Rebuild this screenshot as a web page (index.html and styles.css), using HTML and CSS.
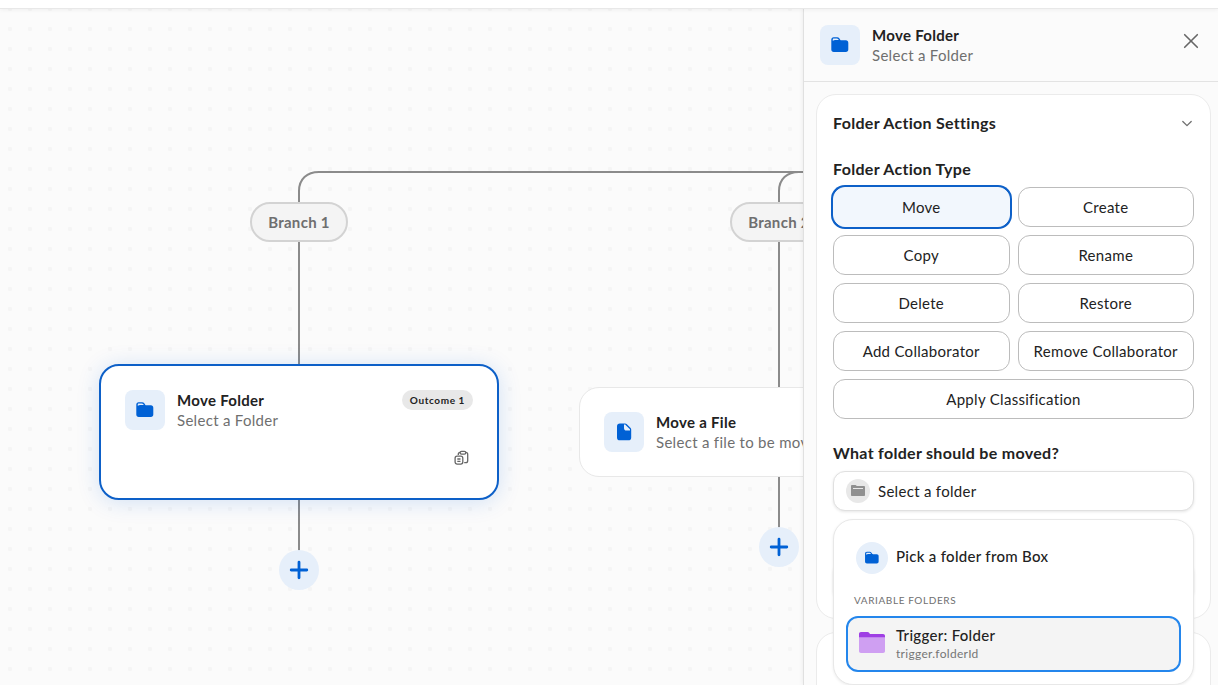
FILE: index.html
```html
<!DOCTYPE html>
<html lang="en">
<head>
    <meta charset="utf-8">
    <title>Workflow Builder</title>
    <link rel="stylesheet" href="styles.css">
</head>
<body>
    <svg class="sprite" aria-hidden="true">
        <symbol id="icon-folder" viewBox="0 0 20 20">
            <path fill="#0061d5" d="M3.700 2.200h3.500c.8 0 1.400.3 1.900.9l1.100 1.600c.3.400.7.600 1.200.600h4.500c1.500 0 2.400.9 2.400 2.400v6.800c0 1.500-.9 2.400-2.400 2.400H3.700c-1.500 0-2.400-.9-2.400-2.400V4.600c0-1.500.9-2.400 2.400-2.400z"/>
            <path fill="#e6effa" d="M3.500 3.500h3.400c.5 0 .9.200 1.200.600L8.800 5H5.200c-1 0-1.800.3-2.400.9V4.300c0-.5.2-.8.7-.8z"/>
        </symbol>
        <symbol id="icon-file" viewBox="0 0 20 20">
            <path fill="#0061d5" d="M5.900 1.500h5.300c.5 0 1 .2 1.400.6l4 4c.4.400.6.9.6 1.400v7.900c0 1.900-1 2.900-2.900 2.900H5.900c-1.900 0-2.900-1-2.900-2.900v-11c0-1.900 1-2.900 2.900-2.900z"/>
            <path fill="#e6effa" d="M10 2.600h.8c.3 0 .6.100.8.300L15.700 7c.2.200.3.500.3.800v.7h-3.400c-1.700 0-2.600-.9-2.600-2.600z"/>
        </symbol>
        <symbol id="icon-plus" viewBox="0 0 20 20">
            <path d="M10 2.200v15.600M2.200 10h15.600" fill="none" stroke="#0061d5" stroke-width="2.800" stroke-linecap="round"/>
        </symbol>
    </svg>

    <div class="topbar"></div>
    <div class="workspace">
        <div class="canvas">
            <svg class="edges" width="900" height="676" fill="none" stroke="#8b8b8b" stroke-width="2">
                <path d="M299 195v-13c0-12 8-19 20-19h580"/>
                <path d="M779 195v-13c0-12 8-19 20-19h100"/>
                <path d="M299 232v124M299 490v52M779 232v148M779 467v52"/>
            </svg>
            <div class="branch branch-1">Branch 1</div>
            <div class="branch branch-2">Branch 2</div>

            <div class="node node-folder selected">
                <div class="node-main">
                    <div class="tile"><svg><use href="#icon-folder"/></svg></div>
                    <div class="titles">
                        <div class="title">Move Folder</div>
                        <div class="subtitle">Select a Folder</div>
                    </div>
                    <span class="outcome">Outcome 1</span>
                </div>
                <div class="node-tools">
                    <svg width="16" height="16" viewBox="0 0 16 16" fill="none" stroke="#666" stroke-width="1.300">
                        <path d="M4.300 5V4.200c0-1.200.7-1.900 1.900-1.900M11.800 2.300c1.200 0 1.900.7 1.900 1.900v6.600c0 1.200-.7 1.900-1.900 1.900h-1.600"/>
                        <rect x="6.100" y="1.300" width="5.700" height="2.900" rx="1.400"/>
                        <rect x="1.100" y="6.200" width="7.700" height="7.900" rx="2"/>
                        <path d="M3.300 9h3.200M3.300 11.400h3.200"/>
                    </svg>
                </div>
            </div>
            <div class="node node-file">
                <div class="node-main">
                    <div class="tile"><svg><use href="#icon-file"/></svg></div>
                    <div class="titles">
                        <div class="title">Move a File</div>
                        <div class="subtitle">Select a file to be moved</div>
                    </div>
                </div>
            </div>
            <div class="add add-1"><svg><use href="#icon-plus"/></svg></div>
            <div class="add add-2"><svg><use href="#icon-plus"/></svg></div>
        </div>

        <div class="panel">
            <div class="panel-header">
                <div class="tile"><svg><use href="#icon-folder"/></svg></div>
                <div class="titles">
                    <div class="title">Move Folder</div>
                    <div class="subtitle">Select a Folder</div>
                </div>
                <svg class="close" width="16" height="16" viewBox="0 0 16 16" fill="none" stroke="#666" stroke-width="1.600" stroke-linecap="round">
                    <path d="M1.700 1.700l12.600 12.600M14.300 1.700L1.700 14.300"/>
                </svg>
            </div>

            <div class="panel-body">
                <div class="section">
                    <div class="section-header">
                        <h2>Folder Action Settings</h2>
                        <svg width="14" height="14" viewBox="0 0 14 14" fill="none" stroke="#6f6f6f" stroke-width="1.300" stroke-linecap="round" stroke-linejoin="round">
                            <path d="M2.800 5.500l4.200 4.100 4.200-4.100"/>
                        </svg>
                    </div>
                    <h3>Folder Action Type</h3>
                    <div class="options">
                        <div class="option active">Move</div>
                        <div class="option">Create</div>
                        <div class="option">Copy</div>
                        <div class="option">Rename</div>
                        <div class="option">Delete</div>
                        <div class="option">Restore</div>
                        <div class="option">Add Collaborator</div>
                        <div class="option">Remove Collaborator</div>
                        <div class="option wide">Apply Classification</div>
                    </div>
                    <h3 class="question">What folder should be moved?</h3>
                    <div class="picker">
                        <div class="field">
                            <span class="field-icon">
                                <svg width="16" height="14" viewBox="0 0 16 14">
                                    <path fill="#909090" d="M1 2.200C1 1.500 1.400 1 2.100 1h3.300c.4 0 .7.200.9.500l.4.600h7.200c.7 0 1.100.400 1.100 1.100v7.700c0 .7-.4 1.100-1.100 1.100H2.100c-.7 0-1.100-.4-1.100-1.100z"/>
                                    <path stroke="#e8e8e8" d="M3 4.500h10"/>
                                </svg>
                            </span>
                            Select a folder
                        </div>
                        <div class="dropdown">
                            <div class="pick">
                                <span class="pick-icon"><svg><use href="#icon-folder"/></svg></span>
                                <span class="pick-label">Pick a folder from Box</span>
                            </div>
                            <div class="group">Variable folders</div>
                            <div class="variable">
                                <svg class="variable-icon" width="26" height="22" viewBox="0 0 26 22">
                                    <path fill="#9f3fe4" d="M0 2C0 .7.700 0 2 0h6.500c.8 0 1.200.3 1.600.8l.9 1.200H24c1.300 0 2 .7 2 2v3H0z"/>
                                    <path fill="#cf9ff2" d="M0 5.300h26V19c0 1.300-.7 2-2 2H2c-1.300 0-2-.7-2-2z"/>
                                </svg>
                                <div class="variable-text">
                                    <div class="variable-name">Trigger: Folder</div>
                                    <div class="variable-path">trigger.folderId</div>
                                </div>
                            </div>
                        </div>
                    </div>
                    <div class="field field-empty"></div>
                </div>
                <div class="section section-next"></div>
            </div>
        </div>
    </div>
</body>
</html>
```
FILE: styles.css
```css
* {
    box-sizing: border-box;
}

body {
    margin: 0;
    height: 685px;
    overflow: hidden;
    display: flex;
    flex-direction: column;
    font-family: Lato, sans-serif;
    font-size: 15px;
    line-height: 20px;
    letter-spacing: 0.3px;
    color: #222;
    background: #fbfbfb;
}

.sprite {
    display: none;
}

.topbar {
    flex: none;
    height: 9px;
    background: #fff;
    border-bottom: 1px solid #e8e8e8;
    box-shadow: 0 1px 4px rgba(0, 0, 0, 0.05);
    z-index: 1;
}

.workspace {
    flex: 1;
    min-height: 0;
    display: flex;
}

/* Canvas */
.canvas {
    flex: 1;
    position: relative;
    overflow: hidden;
    background: radial-gradient(circle at 10px 10px, #f5f5f5 2px, transparent 2.4px) 0 10px / 20px 20px #fbfbfb;
}

.edges {
    position: absolute;
    left: 0;
    top: 0;
}

.branch {
    position: absolute;
    top: 193px;
    width: 98px;
    height: 40px;
    border: 2px solid #d3d3d3;
    border-radius: 20px;
    background: #f4f4f4;
    color: #6f6f6f;
    font-weight: bold;
    line-height: 37px;
    text-align: center;
}

.branch-1 {
    left: 250px;
}

.branch-2 {
    left: 730px;
}

.node {
    position: absolute;
    width: 400px;
    padding: 24px;
    background: #fff;
    border: 1px solid #e8e8e8;
    border-radius: 20px;
}

.node.selected {
    border: 2px solid #0d60c8;
    box-shadow: 0 2px 22px rgba(0, 97, 213, 0.17);
}

.node-folder {
    left: 99px;
    top: 355px;
    height: 136px;
}

.node-file {
    left: 579px;
    top: 378px;
    height: 90px;
}

.node-main {
    display: flex;
    align-items: flex-start;
    gap: 12px;
}

.tile {
    flex: none;
    width: 40px;
    height: 40px;
    display: flex;
    align-items: center;
    justify-content: center;
    border-radius: 8px;
    background: #e6effa;
}

.tile svg,
.add svg {
    width: 20px;
    height: 20px;
}

.titles {
    flex: 1;
    white-space: nowrap;
}

.title {
    font-weight: bold;
}

.subtitle {
    color: #6f6f6f;
}

.outcome {
    height: 20px;
    padding: 0 8px;
    border-radius: 10px;
    background: #e8e8e8;
    font-size: 10px;
    font-weight: bold;
    letter-spacing: 0.6px;
}

.node-tools {
    display: flex;
    justify-content: flex-end;
    padding: 20px 3px 0 0;
}

.add {
    position: absolute;
    width: 40px;
    height: 40px;
    display: flex;
    align-items: center;
    justify-content: center;
    border-radius: 50%;
    background: #e6effa;
}

.add-1 {
    left: 279px;
    top: 541px;
}

.add-2 {
    left: 759px;
    top: 518px;
}

/* Settings panel */
.panel {
    flex: none;
    width: 415px;
    position: relative;
    border-left: 1px solid #e0e0e0;
    background: #fbfbfb;
    box-shadow: 0 0 5px rgba(0, 0, 0, 0.08);
    clip-path: inset(0 0 0 -8px);
}

.panel-header {
    display: flex;
    align-items: flex-start;
    gap: 12px;
    height: 73px;
    padding: 16px 19px 0 16px;
    border-bottom: 1px solid #e3e3e3;
}

.close {
    margin-top: 8px;
}

.panel-body {
    height: 603px;
    padding: 12px 7px 0 12px;
    overflow: hidden;
}

.section {
    height: 525px;
    padding: 18px 16px 0;
    border: 1px solid #ebebeb;
    border-radius: 20px;
    background: #fff;
}

.section-next {
    margin-top: 13px;
    height: 100px;
}

.section-header {
    display: flex;
    justify-content: space-between;
    align-items: center;
    margin-bottom: 26px;
}

h2,
h3 {
    margin: 0;
    font-size: 16px;
    font-weight: bold;
    line-height: 20px;
}

.options {
    display: grid;
    grid-template-columns: 1fr 1fr;
    gap: 8px;
    margin-top: 8px;
}

.option {
    height: 40px;
    border: 1px solid #bcbcbc;
    border-radius: 12px;
    line-height: 39px;
    text-align: center;
    white-space: nowrap;
}

.option.active {
    border-color: #f2f7fd;
    background: #f2f7fd;
    box-shadow: 0 0 0 2px #0d60c8;
}

.option.wide {
    grid-column: span 2;
}

.question {
    margin-top: 24px;
}

.picker {
    position: relative;
    margin-top: 8px;
}

.field {
    display: flex;
    align-items: center;
    gap: 8px;
    height: 40px;
    padding: 0 12px;
    border: 1px solid #e0e0e0;
    border-radius: 12px;
    background: #fff;
    box-shadow: 0 1px 3px rgba(0, 0, 0, 0.1);
}

.field-empty {
    margin-top: 50px;
}

.field-icon {
    display: flex;
    align-items: center;
    justify-content: center;
    width: 24px;
    height: 24px;
    border-radius: 50%;
    background: #e8e8e8;
}

.dropdown {
    position: absolute;
    top: 48px;
    left: 0;
    right: 0;
    height: 166px;
    padding: 12px;
    border: 1px solid #e8e8e8;
    border-radius: 20px;
    background: #fff;
    box-shadow: 0 1px 3px rgba(0, 0, 0, 0.08);
}

.pick {
    display: flex;
    align-items: center;
    gap: 8px;
    height: 51px;
    padding-left: 10px;
    font-weight: 500;
}

.pick-label {
    padding-bottom: 3px;
}

.pick-icon {
    display: flex;
    align-items: center;
    justify-content: center;
    width: 32px;
    height: 32px;
    border-radius: 50%;
    background: #e6effa;
}

.pick-icon svg {
    width: 16px;
    height: 16px;
}

.group {
    height: 33px;
    padding: 7px 8px 0;
    font-size: 10px;
    letter-spacing: 0.6px;
    text-transform: uppercase;
    color: #6f6f6f;
}

.variable {
    display: flex;
    align-items: center;
    gap: 11px;
    height: 56px;
    padding: 0 11px;
    border: 2px solid #2486ec;
    border-radius: 12px;
    background: #f4f4f4;
}

.variable-icon {
    margin-bottom: 2px;
}

.variable-text {
    padding-bottom: 2px;
}

.variable-name {
    font-weight: 500;
    line-height: 20px;
}

.variable-path {
    font-size: 12px;
    line-height: 17px;
    color: #767676;
}
```
